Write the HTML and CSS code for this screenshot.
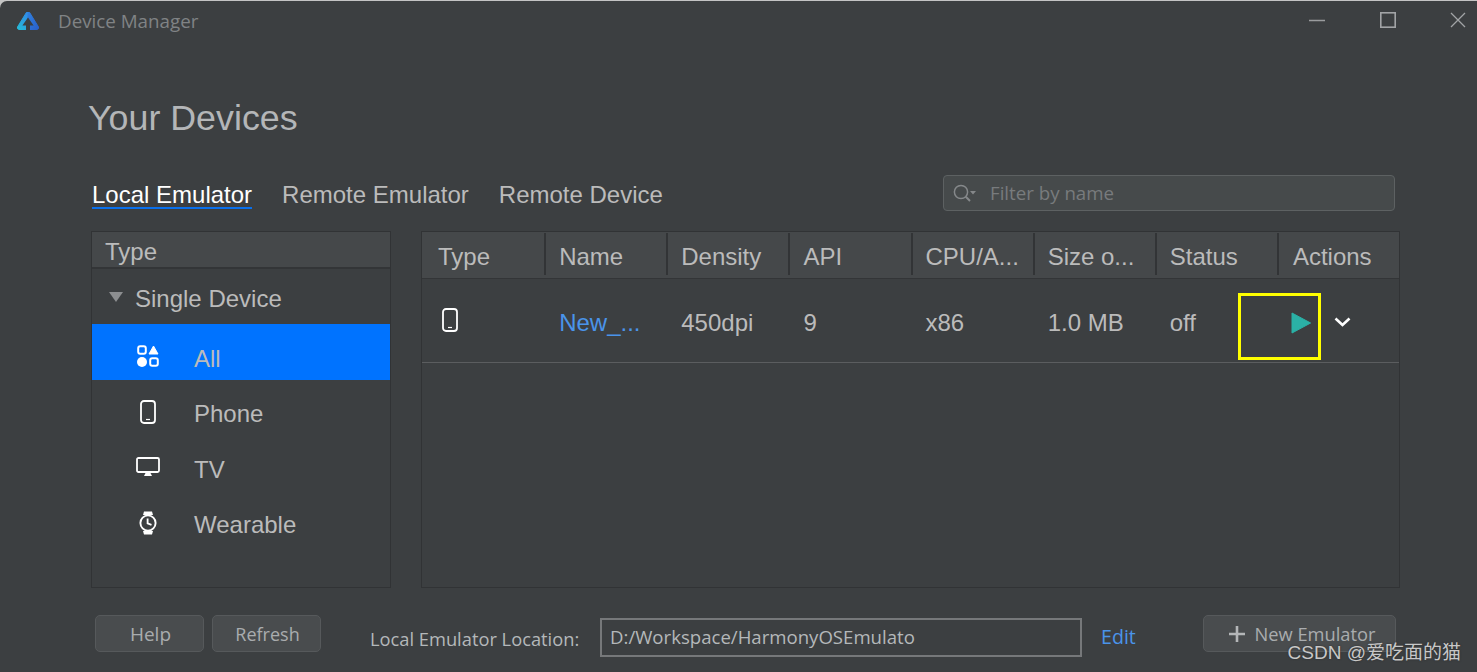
FILE: index.html
```html
<!DOCTYPE html>
<html lang="en">
<head>
<meta charset="utf-8">
<title>Device Manager</title>
<link rel="stylesheet" href="styles.css">
</head>
<body>
<div class="app">
  <header class="titlebar">
    <svg class="logo" width="24" height="20" viewBox="0 0 24 20">
      <defs>
        <linearGradient id="lg1" x1="0" y1="1" x2="0.7" y2="0"><stop offset="0" stop-color="#25bcd6"/><stop offset="1" stop-color="#2f8fe6"/></linearGradient>
        <linearGradient id="lg2" x1="0" y1="0" x2="1" y2="1"><stop offset="0" stop-color="#2f80e0"/><stop offset="1" stop-color="#2a5fc8"/></linearGradient>
      </defs>
      <path d="M12 1.5 H10.4 L1.5 16 Q0.8 18 3 18.5 H12 Z" fill="url(#lg1)" stroke="url(#lg1)" stroke-linejoin="round"/>
      <path d="M12 1.5 H13.6 L22.5 16 Q23.2 18 21 18.5 H12 Z" fill="url(#lg2)" stroke="url(#lg2)" stroke-linejoin="round"/>
      <path d="M12 6.5 L17.6 14.5 H14 V20 H10 V14.5 H6.4 Z" fill="#3c3f41"/>
    </svg>
    <span class="app-title">Device Manager</span>
    <div class="window-controls">
      <svg width="16" height="16" viewBox="0 0 16 16"><path d="M0 8.5H16" stroke="#9a9c9e" stroke-width="1.4"/></svg>
      <svg class="ctl-max" width="16" height="16" viewBox="0 0 16 16"><rect x="0.8" y="0.8" width="14.4" height="14.4" fill="none" stroke="#a2a4a6" stroke-width="1.6"/></svg>
      <svg width="16" height="16" viewBox="0 0 16 16"><path d="M1 1L15 15M15 1L1 15" stroke="#a2a4a6" stroke-width="1.3"/></svg>
    </div>
  </header>

  <h1 class="heading">Your Devices</h1>

  <div class="tabs-row">
    <nav class="tabs">
      <span class="tab tab-active">Local Emulator</span>
      <span class="tab">Remote Emulator</span>
      <span class="tab">Remote Device</span>
    </nav>
    <div class="search">
      <svg class="search-icon" width="26" height="22" viewBox="0 0 26 22">
        <circle cx="9" cy="10" r="6.6" fill="none" stroke="#85888a" stroke-width="1.5"/>
        <path d="M13.8 14.8L18 19" stroke="#85888a" stroke-width="2"/>
        <path d="M18 9H24L21 12.5Z" fill="#85888a"/>
      </svg>
      <span class="search-placeholder">Filter by name</span>
    </div>
  </div>

  <main class="main">
    <aside class="sidebar">
      <div class="side-head">Type</div>
      <div class="group"><span class="caret"></span>Single Device</div>
      <div class="item item-active">
        <span class="item-icon">
          <svg width="22" height="22" viewBox="0 0 22 22">
            <rect x="1.2" y="1.2" width="7.6" height="7.6" rx="2" fill="none" stroke="#fff" stroke-width="2"/>
            <path d="M16.5 1L21 9H12Z" fill="#fff" stroke="#fff" stroke-linejoin="round"/>
            <circle cx="5" cy="17" r="5" fill="#fff"/>
            <rect x="13.2" y="13.2" width="7.6" height="7.6" rx="2" fill="none" stroke="#fff" stroke-width="2"/>
          </svg>
        </span>All</div>
      <div class="item">
        <span class="item-icon">
          <svg width="16" height="24" viewBox="0 0 16 24"><rect x="1" y="1" width="14" height="22" rx="3" fill="none" stroke="#fff" stroke-width="1.8"/><path d="M6 19.5H10" stroke="#fff" stroke-width="1.2"/></svg>
        </span>Phone</div>
      <div class="item">
        <span class="item-icon">
          <svg width="24" height="20" viewBox="0 0 24 20"><rect x="1" y="1" width="22" height="14" rx="1.5" fill="none" stroke="#fff" stroke-width="1.8"/><path d="M9.5 16H14.5L16 19H8Z" fill="#fff"/></svg>
        </span>TV</div>
      <div class="item">
        <span class="item-icon">
          <svg width="18" height="24" viewBox="0 0 18 24"><path d="M4 4L5 0.5H13L14 4ZM4 20L5 23.5H13L14 20Z" fill="#fff"/><circle cx="9" cy="12" r="7.6" fill="none" stroke="#fff" stroke-width="1.9"/><path d="M8.6 7.5V12.4L12.5 13.8" fill="none" stroke="#fff" stroke-width="1.8"/></svg>
        </span>Wearable</div>
    </aside>

    <section class="table">
      <div class="thead">
        <div class="th">Type</div>
        <div class="th">Name</div>
        <div class="th">Density</div>
        <div class="th">API</div>
        <div class="th">CPU/A...</div>
        <div class="th">Size o...</div>
        <div class="th">Status</div>
        <div class="th th-last">Actions</div>
      </div>
      <div class="trow">
        <div class="td td-icon">
          <svg width="16" height="24" viewBox="0 0 16 24"><rect x="1" y="1" width="14" height="22" rx="3" fill="none" stroke="#fff" stroke-width="1.8"/><path d="M6 19.5H10" stroke="#fff" stroke-width="1.2"/></svg>
        </div>
        <div class="td td-link">New_...</div>
        <div class="td">450dpi</div>
        <div class="td">9</div>
        <div class="td">x86</div>
        <div class="td">1.0 MB</div>
        <div class="td">off</div>
        <div class="td td-actions">
          <span class="highlight"></span>
          <svg class="play" width="20" height="22" viewBox="0 0 20 22"><path d="M1 1L19.6 11L1 21Z" fill="#2bb1a6" stroke="#2bb1a6" stroke-linejoin="round"/></svg>
          <svg class="chevron" width="17" height="10" viewBox="0 0 17 10"><path d="M1.5 1.5L8.5 8L15.5 1.5" fill="none" stroke="#fff" stroke-width="2.6"/></svg>
        </div>
      </div>
    </section>
  </main>

  <footer class="footer">
    <button class="btn btn-help">Help</button>
    <button class="btn btn-refresh">Refresh</button>
    <span class="loc-label">Local Emulator Location:</span>
    <div class="loc-path">D:/Workspace/HarmonyOSEmulato</div>
    <span class="edit">Edit</span>
    <button class="btn btn-new"><svg width="16" height="16" viewBox="0 0 16 16"><path d="M8 0V16M0 8H16" stroke="#b4b6b8" stroke-width="2.6"/></svg>New Emulator</button>
  </footer>

  <div class="watermark">CSDN @爱吃面的猫</div>
</div>
</body>
</html>
```
FILE: styles.css
```css
* { box-sizing: border-box; }
html, body { margin: 0; padding: 0; }
body { background: #c4c4c4; overflow: hidden; }

.app {
  position: relative;
  width: 1477px;
  height: 672px;
  margin-top: 1px;
  background: #3c3f41;
  border-top-left-radius: 7px;
  font-family: "Liberation Sans", Arial, sans-serif;
  font-size: 24px;
  color: #bbbbbb;
  overflow: hidden;
}

.titlebar {
  display: flex;
  align-items: center;
  height: 40px;
  padding-left: 16px;
  padding-right: 11px;
}
.logo { margin-right: 18px; }
.app-title { font-family: "Open Sans", sans-serif; font-size: 18.8px; color: #808385; }
.window-controls { display: flex; align-items: center; gap: 54px; margin: -2px 0 0 auto; }
.ctl-max { margin-left: 1px; }

.heading {
  margin: 57px 0 0 88px;
  height: 40px;
  font-size: 35.8px;
  line-height: 40px;
  font-weight: 400;
  color: #b4b6b8;
}

.tabs-row {
  display: flex;
  justify-content: space-between;
  align-items: flex-start;
  height: 36px;
  margin-top: 37px;
  padding: 0 82px 0 92px;
}
.tabs { display: flex; gap: 30px; padding-top: 6px; }
.tab { height: 28px; line-height: 27px; }
.tab-active { color: #fff; border-bottom: 2px solid #0a70ec; }

.search {
  display: flex;
  align-items: center;
  width: 452px;
  height: 36px;
  padding-left: 8px;
  background: #464a4b;
  border: 1.5px solid #5d6162;
  border-radius: 4px;
}
.search-icon { margin-right: 12px; }
.search-placeholder { margin-top: -2px; font-family: "Open Sans", sans-serif; font-size: 18.7px; color: #787b7d; }

.main {
  display: flex;
  gap: 30px;
  height: 357px;
  margin-top: 20px;
  padding: 0 77px 0 91px;
}

.sidebar {
  width: 300px;
  border: 1px solid #313335;
}
.side-head {
  height: 37px;
  padding: 6px 0 0 13px;
  line-height: 28px;
  background: #45484a;
  border-bottom: 2px solid #333537;
}
.group {
  display: flex;
  align-items: center;
  height: 55px;
  padding: 4px 0 0 17px;
}
.caret {
  width: 0;
  height: 0;
  margin: -4px 12px 0 0;
  border-style: solid;
  border-width: 10px 7.5px 0;
  border-color: #8c8e90 transparent transparent;
}
.item {
  display: flex;
  align-items: center;
  height: 55.5px;
  padding: 14px 0 0 44px;
}
.item-active { background: #0073ff; }
.item-icon {
  display: flex;
  justify-content: center;
  width: 24px;
  margin: -5px 34px 0 0;
}

.table {
  flex: 1;
  border: 1px solid #313335;
}
.thead, .trow {
  display: grid;
  grid-template-columns: repeat(8, 1fr);
}
.thead {
  height: 47px;
  background: #45484a;
  border-bottom: 1px solid #333537;
}
.th {
  height: 42px;
  margin: 1px -2px 0 0;
  padding: 10px 0 0 15px;
  line-height: 28px;
  border-right: 2px solid #323436;
}
.th:first-child { padding-left: 16px; }
.th-last { border-right: 0; padding-left: 16px; }
.trow {
  height: 84px;
  border-bottom: 1px solid #5b5d5f;
}
.td {
  display: flex;
  align-items: center;
  padding: 4px 0 0 15px;
}
.td-icon { padding: 0 0 1px 20px; }
.td-link { color: #4a94ea; }
.td-actions { position: relative; padding: 0 0 0 14px; }
.highlight {
  position: absolute;
  left: -39px;
  top: 14px;
  width: 83px;
  height: 67px;
  border: 3px solid #ffff00;
}
.play { margin-top: 4px; }
.chevron { margin: 3px 0 0 23px; }

.footer {
  display: flex;
  align-items: flex-start;
  margin-top: 27px;
  padding-left: 95px;
  font-family: "Open Sans", sans-serif;
  font-size: 18.3px;
}
.btn {
  display: flex;
  justify-content: center;
  align-items: center;
  height: 37px;
  padding: 0;
  font: inherit;
  color: #a9acae;
  background: #494c4e;
  border: 1.5px solid #56595b;
  border-radius: 5px;
}
.btn-help { width: 109px; padding-left: 2px; font-size: 19px; }
.btn-refresh { width: 109px; margin-left: 8px; padding-left: 2px; font-size: 18px; }
.loc-label { width: 209px; margin: 11px 21px 0 49px; white-space: nowrap; color: #b4b8ba; }
.loc-path {
  width: 482px;
  height: 39px;
  margin-top: 3px;
  padding-left: 8px;
  font-size: 18.6px;
  line-height: 34px;
  border: 2px solid #76787a;
  color: #b4b8ba;
}
.edit { width: 34px; margin: 10px 0 0 19px; font-size: 19.6px; line-height: 24px; color: #4a94ea; }
.btn-new { width: 193px; margin-left: 68px; padding-left: 5px; gap: 10px; }

.watermark {
  position: absolute;
  right: 16px;
  bottom: 8px;
  font-family: "Liberation Sans", "Noto Sans CJK SC", sans-serif;
  font-size: 19px;
  line-height: 24px;
  color: #c8c8c8;
  text-shadow: 0 0 2px #2a2a2a;
}
```
